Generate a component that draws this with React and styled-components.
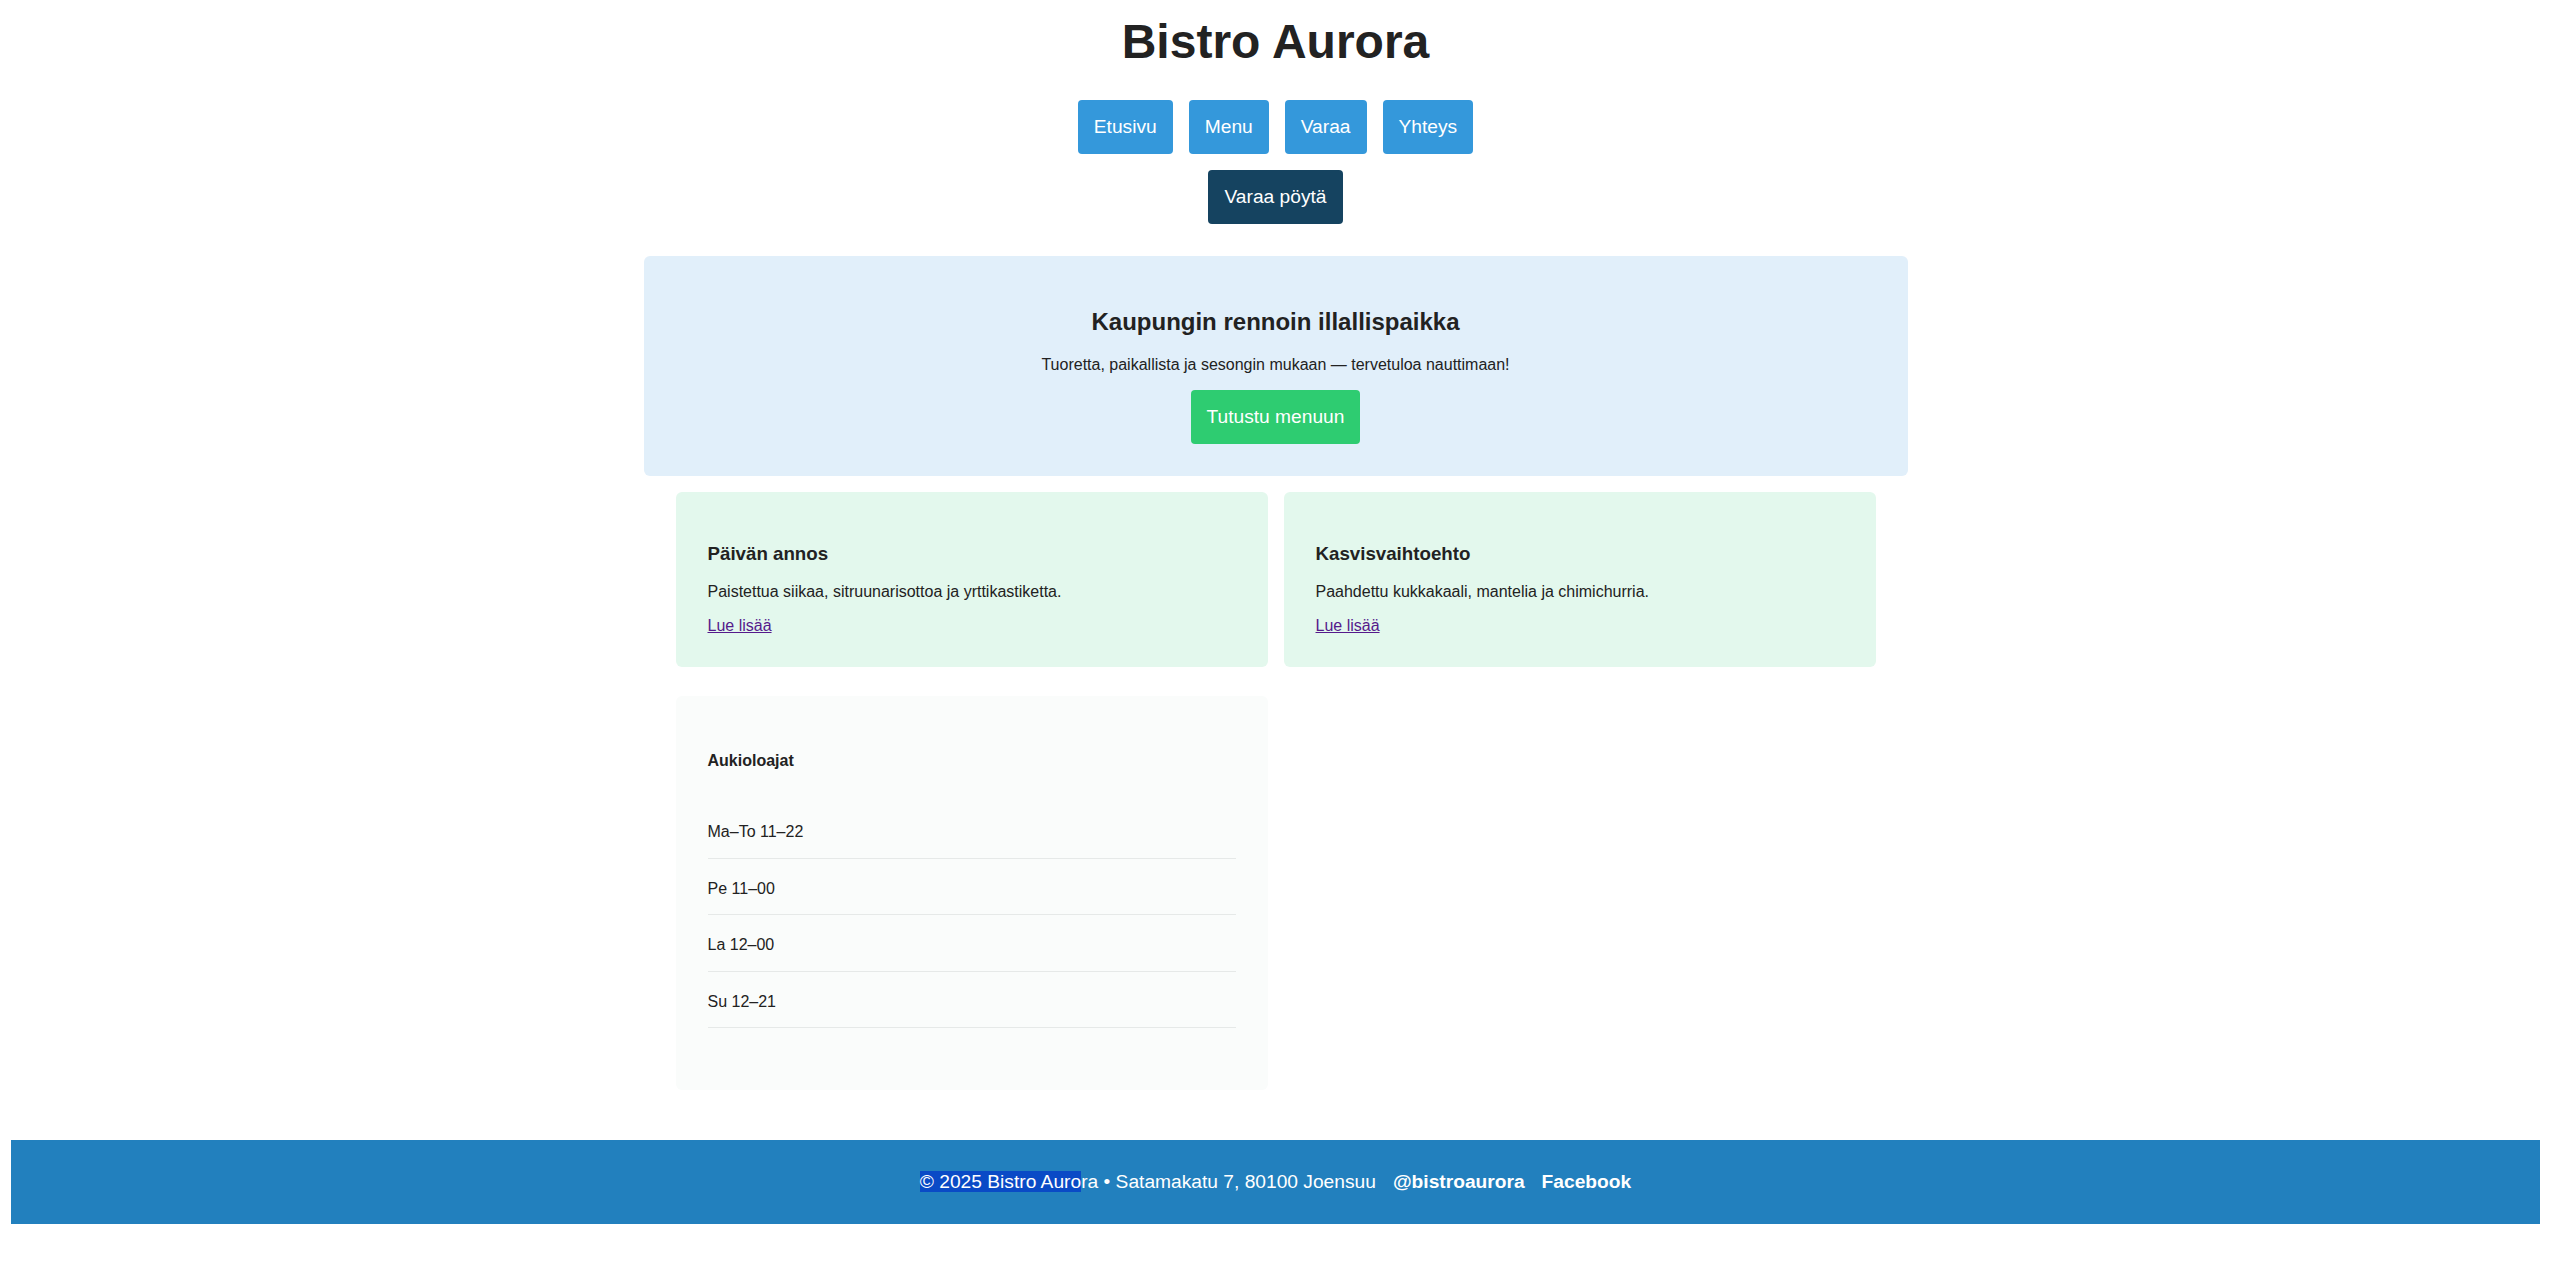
import React from "react";
import styled, { createGlobalStyle, css } from "styled-components";

const GlobalStyle = createGlobalStyle`
  body {
    margin: 0;
    background: #ffffff;
    color: #222222;
    font-family: "Liberation Sans", Arial, sans-serif;
    font-size: 16px;
  }
`;

const hours = ["Ma–To 11–22", "Pe 11–00", "La 12–00", "Su 12–21"];

const dishes = [
  {title: "Päivän annos", text: "Paistettua siikaa, sitruunarisottoa ja yrttikastiketta."},
  {title: "Kasvisvaihtoehto", text: "Paahdettu kukkakaali, mantelia ja chimichurria."},
];

const App = () => {
  return (
    <Page>
      <GlobalStyle/>
      <Header>
        <Title>Bistro Aurora</Title>
        <NavRow>
          <NavButton href="#">Etusivu</NavButton>
          <NavButton href="#">Menu</NavButton>
          <NavButton href="#">Varaa</NavButton>
          <NavButton href="#">Yhteys</NavButton>
        </NavRow>
        <CtaRow>
          <NavButton href="#" $variant="dark">Varaa pöytä</NavButton>
        </CtaRow>
      </Header>

      <Main>
        <Hero>
          <HeroTitle>Kaupungin rennoin illallispaikka</HeroTitle>
          <HeroText>Tuoretta, paikallista ja sesongin mukaan — tervetuloa nauttimaan!</HeroText>
          <HeroActions>
            <NavButton href="#" $variant="green">Tutustu menuun</NavButton>
          </HeroActions>
        </Hero>

        <CardGrid>
          {dishes.map((d) => (
            <Card key={d.title}>
              <CardTitle>{d.title}</CardTitle>
              <CardText>{d.text}</CardText>
              <ReadMore href="#">Lue lisää</ReadMore>
            </Card>
          ))}
        </CardGrid>

        <HoursGrid>
          <HoursCard>
            <HoursTitle>Aukioloajat</HoursTitle>
            <HoursList>
              {hours.map((h) => (
                <HoursItem key={h}>{h}</HoursItem>
              ))}
            </HoursList>
          </HoursCard>
        </HoursGrid>
      </Main>

      <Footer>
        <Selected>© 2025 Bistro Auro</Selected>ra • Satamakatu 7, 80100 Joensuu
        <FooterLink href="#">@bistroaurora</FooterLink>
        <FooterLink href="#">Facebook</FooterLink>
      </Footer>
    </Page>
  );
};

export default App;

const Page = styled.div`
  padding: 8px;
`;

const Header = styled.header`
  text-align: center;
`;

const Title = styled.h1`
  font-size: 48px;
  font-weight: bold;
  color: #222222;
  margin: 6px 0 31px;
`;

const NavRow = styled.nav`
  display: flex;
  justify-content: center;
  gap: 16px;
`;

const CtaRow = styled.div`
  display: flex;
  justify-content: center;
  margin-top: 16px;
`;

const variants = {
  blue: css`background: #3498db;`,
  dark: css`background: #154360;`,
  green: css`background: #2ecc71;`,
};

const NavButton = styled.a`
  display: inline-block;
  padding: 16px;
  border-radius: 4px;
  color: #ffffff;
  font-size: 19.2px;
  text-decoration: none;
  ${({$variant}) => variants[$variant || "blue"]}
`;

const Main = styled.main`
  margin-top: 32px;
`;

const Hero = styled.section`
  max-width: 1200px;
  margin: 0 auto;
  padding: 32px;
  background: #e1effa;
  border-radius: 6px;
  text-align: center;
`;

const HeroTitle = styled.h2`
  font-size: 24px;
  margin: 20px 0;
`;

const HeroText = styled.p`
  margin: 16px 0;
`;

const HeroActions = styled.div`
  display: flex;
  justify-content: center;
`;

const CardGrid = styled.div`
  max-width: 1200px;
  margin: 16px auto 0;
  display: grid;
  grid-template-columns: 1fr 1fr;
  gap: 16px;
`;

const Card = styled.article`
  background: #e3f8ed;
  padding: 32px;
  border-radius: 6px;
`;

const CardTitle = styled.h3`
  font-size: 18.72px;
  margin: 18.72px 0;
`;

const CardText = styled.p`
  margin: 16px 0;
`;

const ReadMore = styled.a`
  color: #551a8b;
  text-decoration: underline;
`;

const HoursGrid = styled.div`
  max-width: 1200px;
  margin: 29px auto 0;
  display: grid;
  grid-template-columns: 1fr 1fr;
  gap: 16px;
`;

const HoursCard = styled.aside`
  background: #fafcfb;
  padding: 32px;
  border-radius: 6px;
`;

const HoursTitle = styled.h4`
  font-size: 16px;
  margin: 24px 0 21px;
`;

const HoursList = styled.ul`
  list-style: none;
  padding: 0;
  margin: 32px 0 30px;
`;

const HoursItem = styled.li`
  padding: 20px 0 16px;
  line-height: 19.5px;
  border-bottom: 1px solid #e6e9e8;
`;

const Footer = styled.footer`
  margin: 50px 3px 0;
  padding: 31px;
  background: #2280be;
  color: #ffffff;
  text-align: center;
  font-size: 19.2px;
`;

const Selected = styled.span`
  background: #0a4ac6;
`;

const FooterLink = styled.a`
  margin-left: 17px;
  color: #ffffff;
  font-weight: bold;
  text-decoration: none;
`;
